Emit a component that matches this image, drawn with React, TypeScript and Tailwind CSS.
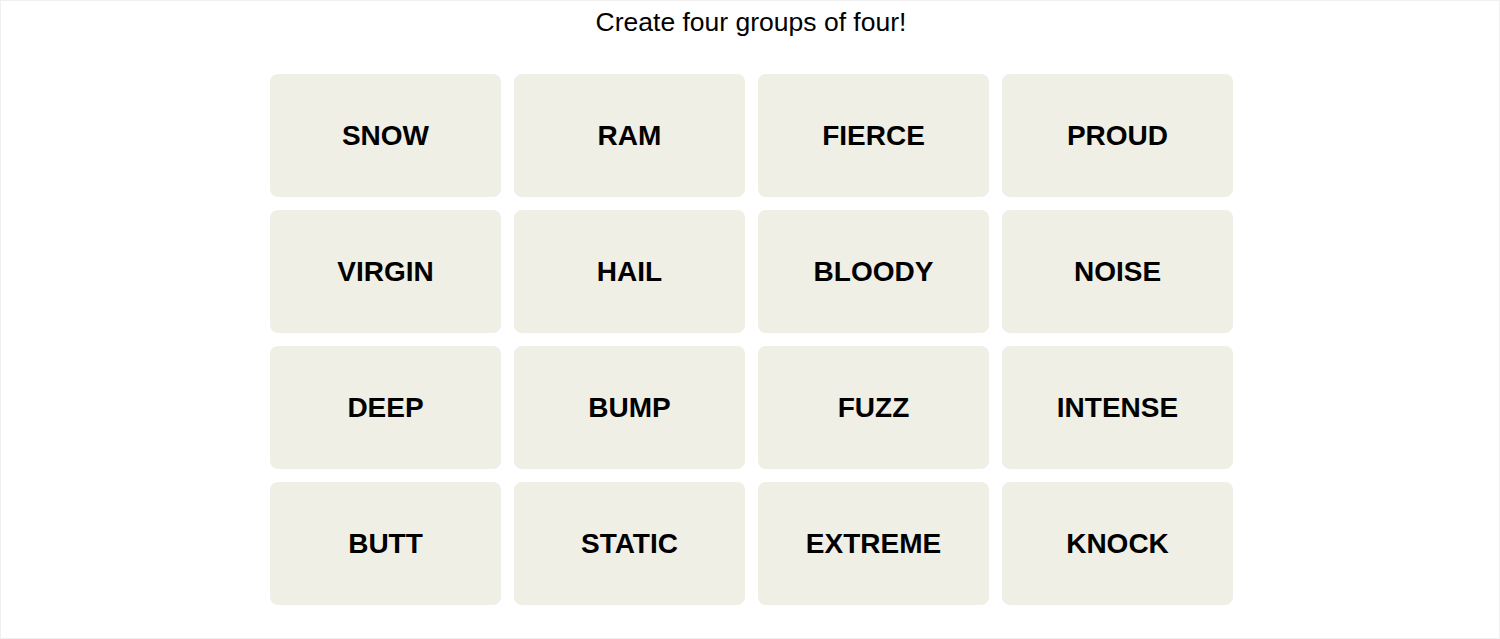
import React from 'react';

const words = [
  'SNOW', 'RAM', 'FIERCE', 'PROUD',
  'VIRGIN', 'HAIL', 'BLOODY', 'NOISE',
  'DEEP', 'BUMP', 'FUZZ', 'INTENSE',
  'BUTT', 'STATIC', 'EXTREME', 'KNOCK',
];

const App: React.FC = () => {
  return (
    <div
      className="w-[1500px] h-[639px] bg-white border border-[#f0f0f0] flex flex-col items-center text-black"
      style={{ fontFamily: '"Liberation Sans", Arial, sans-serif' }}
    >
      <h1 className="mt-[6px] text-[26.5px] leading-[31px] font-normal pl-[2px]">Create four groups of four!</h1>

      <div className="mt-[36px] ml-[3px] grid grid-cols-[repeat(4,231px)] auto-rows-[123px] gap-[13px]">
        {words.map((w) => (
          <button
            key={w}
            type="button"
            className="bg-[#efefe6] rounded-[8px] flex items-center justify-center text-[28px] font-bold uppercase cursor-pointer"
          >
            {w}
          </button>
        ))}
      </div>
    </div>
  );
};

export default App;
